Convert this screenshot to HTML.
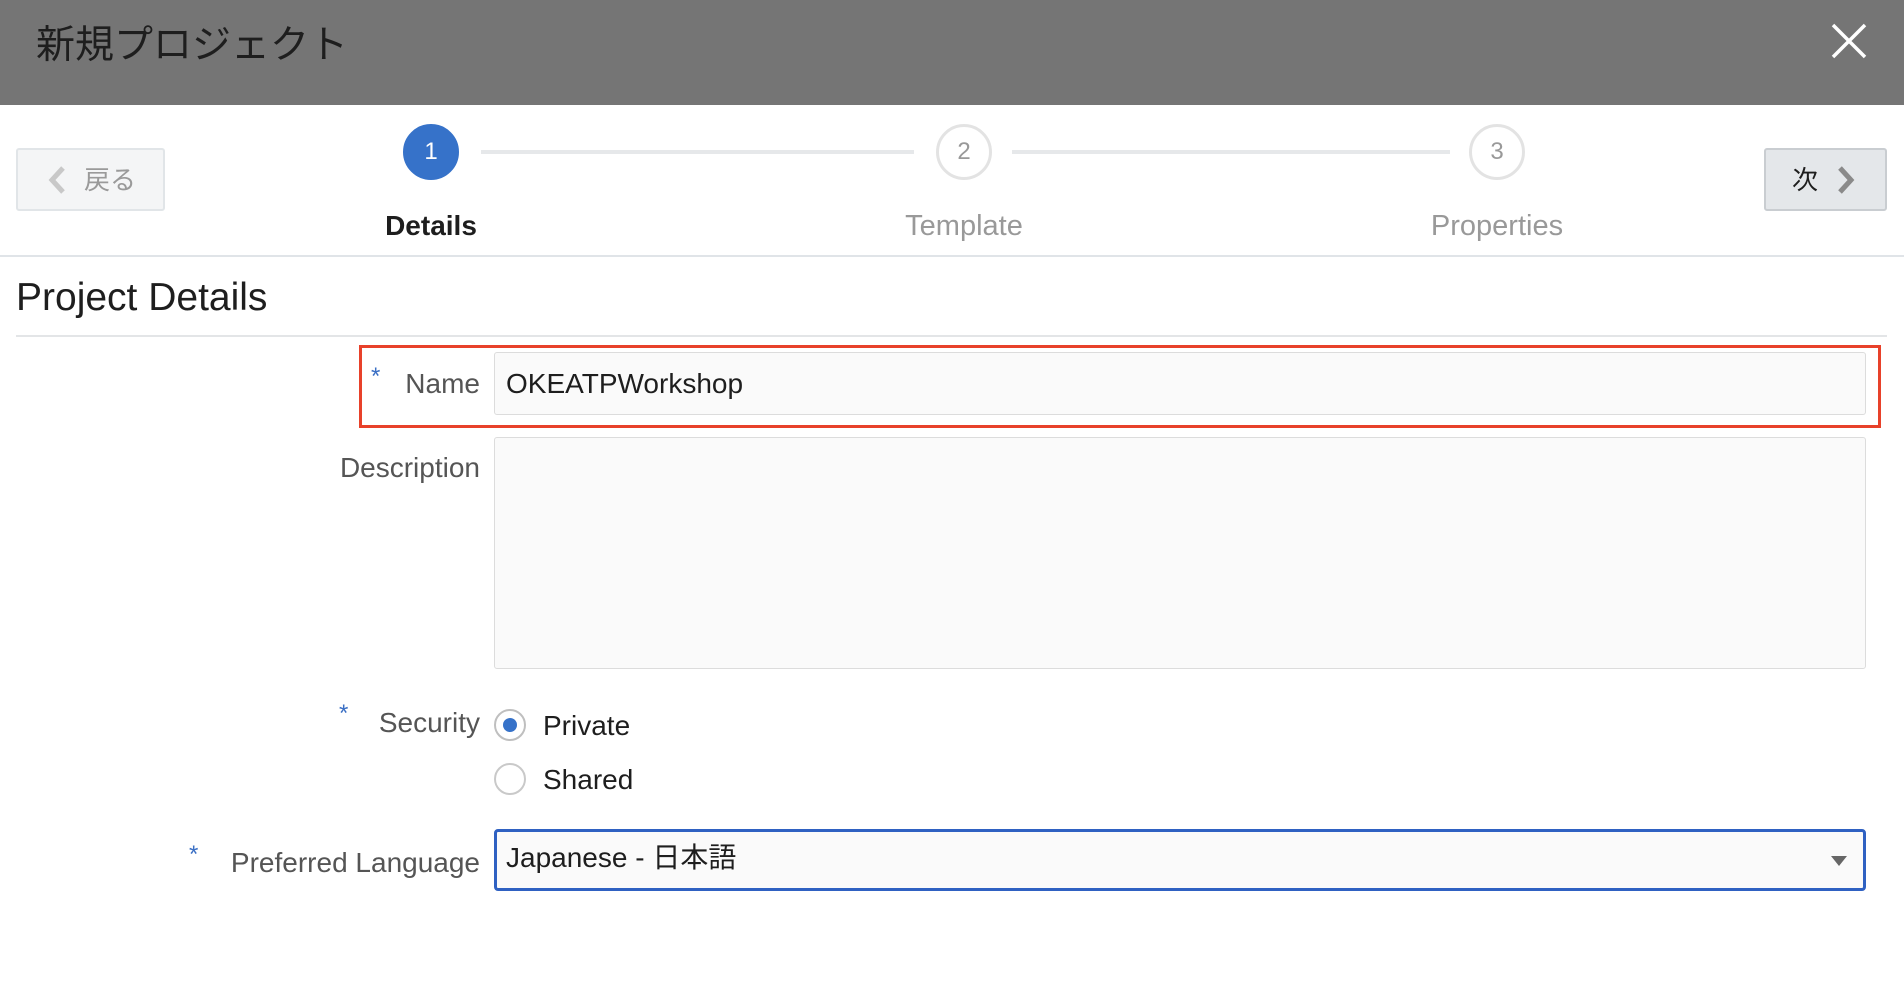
<!DOCTYPE html>
<html><head><meta charset="utf-8"><style>
*{margin:0;padding:0;box-sizing:border-box}
body{width:1904px;height:998px;background:#fff;position:relative;overflow:hidden;font-family:"Liberation Sans","Noto Sans CJK JP",sans-serif}
.a{position:absolute}
.lbl{position:absolute;right:1424px;font-size:28px;color:#555;line-height:30px;white-space:nowrap}
.ast{position:absolute;color:#3a6fc4;font-size:24px;line-height:24px}
.circ{position:absolute;width:56px;height:56px;border-radius:50%;border:3px solid #e3e3e3;background:#fff;color:#999;font-size:24px;display:flex;align-items:center;justify-content:center}
.step{position:absolute;top:210px;font-size:29px;color:#999;transform:translateX(-50%);white-space:nowrap}
.radio{position:absolute;width:32px;height:32px;border-radius:50%;border:2px solid #c9c9c9;background:#fff}
</style></head><body>
<div class="a" style="left:0;top:0;width:1904px;height:105px;background:#757575"></div>
<div class="a" style="left:36px;top:23px;font-size:39px;color:#1e1e1e;line-height:46px">新規プロジェクト</div>
<svg class="a" style="left:1830px;top:22px" width="38" height="38" viewBox="0 0 38 38"><path d="M3 3L35 35M35 3L3 35" stroke="#fff" stroke-width="3.5"/></svg>

<div class="a" style="left:16px;top:148px;width:149px;height:63px;background:#f4f5f6;border:2px solid #e1e5e8;border-radius:3px"></div>
<svg class="a" style="left:46px;top:165px" width="22" height="30" viewBox="0 0 22 30"><path d="M17 3L6 15L17 27" stroke="#c8c8c8" stroke-width="5" fill="none"/></svg>
<div class="a" style="left:84px;top:164px;font-size:26px;color:#9a9a9a;line-height:32px">戻る</div>

<div class="a" style="left:1764px;top:148px;width:123px;height:63px;background:#e4e7ea;border:2px solid #c9cdd1;border-radius:3px"></div>
<div class="a" style="left:1792px;top:164px;font-size:26px;color:#1e1e1e;line-height:32px">次</div>
<svg class="a" style="left:1835px;top:165px" width="22" height="30" viewBox="0 0 22 30"><path d="M5 3L16 15L5 27" stroke="#8a8a8a" stroke-width="5" fill="none"/></svg>

<div class="a" style="left:481px;top:150px;width:433px;height:4px;background:#e6e8ea"></div>
<div class="a" style="left:1012px;top:150px;width:438px;height:4px;background:#e6e8ea"></div>
<div class="circ" style="left:403px;top:124px;background:#3672c9;border-color:#3672c9;color:#fff">1</div>
<div class="circ" style="left:936px;top:124px">2</div>
<div class="circ" style="left:1469px;top:124px">3</div>
<div class="step" style="left:431px;color:#1e1e1e;font-weight:bold;font-size:28px">Details</div>
<div class="step" style="left:964px">Template</div>
<div class="step" style="left:1497px">Properties</div>

<div class="a" style="left:0;top:255px;width:1904px;height:2px;background:#e0e4e8"></div>
<div class="a" style="left:16px;top:276px;font-size:39px;color:#1e1e1e;line-height:44px">Project Details</div>
<div class="a" style="left:16px;top:335px;width:1871px;height:2px;background:#e3e5e7"></div>

<div class="a" style="left:359px;top:345px;width:1522px;height:83px;border:3px solid #e8412a"></div>
<span class="ast" style="left:371px;top:365px">*</span>
<div class="lbl" style="top:369px">Name</div>
<div class="a" style="left:494px;top:352px;width:1372px;height:63px;background:#fafafa;border:1px solid #dcdcdc;border-radius:3px"></div>
<div class="a" style="left:506px;top:368px;font-size:28px;color:#1e1e1e;line-height:32px">OKEATPWorkshop</div>

<div class="lbl" style="top:453px">Description</div>
<div class="a" style="left:494px;top:437px;width:1372px;height:232px;background:#fafafa;border:1px solid #dcdcdc;border-radius:3px"></div>

<span class="ast" style="left:339px;top:702px">*</span>
<div class="lbl" style="top:708px">Security</div>
<div class="radio" style="left:494px;top:709px;border-color:#bfbfbf"></div>
<div class="a" style="left:503px;top:718px;width:14px;height:14px;border-radius:50%;background:#3672c9"></div>
<div class="a" style="left:543px;top:710px;font-size:28px;color:#1e1e1e;line-height:32px">Private</div>
<div class="radio" style="left:494px;top:763px"></div>
<div class="a" style="left:543px;top:764px;font-size:28px;color:#1e1e1e;line-height:32px">Shared</div>

<span class="ast" style="left:189px;top:843px">*</span>
<div class="lbl" style="top:848px">Preferred Language</div>
<div class="a" style="left:494px;top:829px;width:1372px;height:62px;background:#fafafa;border:3px solid #2f61c2;border-radius:4px"></div>
<div class="a" style="left:506px;top:842px;font-size:28px;color:#1e1e1e;line-height:32px">Japanese - 日本語</div>
<svg class="a" style="left:1830px;top:855px" width="18" height="12" viewBox="0 0 18 12"><path d="M1 1H17L9 11Z" fill="#666"/></svg>
</body></html>
